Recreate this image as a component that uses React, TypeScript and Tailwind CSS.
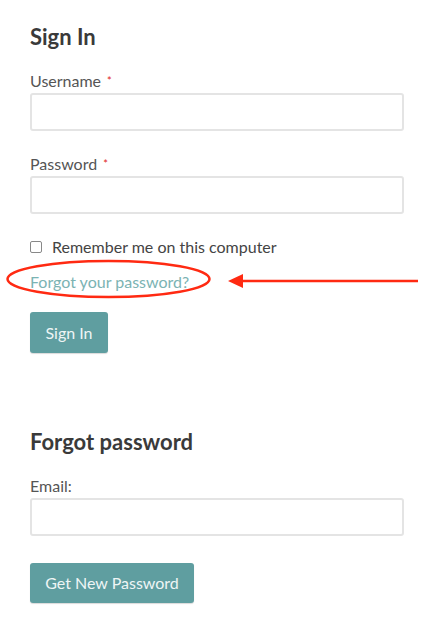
import { useState } from "react";

function Label({ text, required }: { text: string; required?: boolean }) {
  return (
    <label className="block text-[16px] leading-[19px] text-[#555]">
      {text}
      {required && <span className="ml-[6px] text-[11px] align-top text-[#e0231b]">*</span>}
    </label>
  );
}

function TextInput({ type = "text" }: { type?: string }) {
  return (
    <input
      type={type}
      className="mt-[3px] block h-[38px] w-[374px] rounded-[3px] border-2 border-[#e4e4e4] bg-white px-2 text-[15px] outline-none"
    />
  );
}

export default function App() {
  const [remember, setRemember] = useState(false);

  return (
    <div className="relative min-h-screen bg-white font-['Lato','Noto_Sans',sans-serif] text-[#333]">
      <div className="px-[30px] pt-[24px]">
        <h2 className="text-[22px] leading-[26px] font-bold text-[#3a3a3a]">Sign In</h2>

        <div className="mt-[21px]">
          <Label text="Username" required />
          <TextInput />
        </div>

        <div className="mt-[23px]">
          <Label text="Password" required />
          <TextInput type="password" />
        </div>

        <label className="mt-[23px] flex items-center gap-[10px] text-[16px] leading-[19px] text-[#444]">
          <input
            type="checkbox"
            checked={remember}
            onChange={() => setRemember(!remember)}
            className="h-[12px] w-[12px] appearance-none rounded-[2px] border border-[#888] bg-white"
          />
          Remember me on this computer
        </label>

        <a href="#" className="mt-[16px] block text-[16px] leading-[19px] text-[#7bb3b3]">
          Forgot your password?
        </a>

        <button
          type="button"
          className="mt-[21px] block h-[41px] w-[78px] rounded-[3px] bg-[#5f9ea0] text-[16px] text-[#eef5f5] shadow-[0_1px_1px_rgba(0,0,0,0.15)]"
        >
          Sign In
        </button>

        <h2 className="mt-[76px] text-[22px] leading-[26px] font-bold text-[#3a3a3a]">Forgot password</h2>

        <div className="mt-[21px]">
          <Label text="Email:" />
          <TextInput type="email" />
        </div>

        <button
          type="button"
          className="mt-[27px] block h-[40px] w-[164px] rounded-[3px] bg-[#5f9ea0] text-[16px] text-[#eef5f5] shadow-[0_1px_1px_rgba(0,0,0,0.15)]"
        >
          Get New Password
        </button>
      </div>

      {/* annotation overlay */}
      <svg className="pointer-events-none absolute left-0 top-0" width="447" height="633" viewBox="0 0 447 633">
        <ellipse cx="108.5" cy="279" rx="101" ry="18" fill="none" stroke="#ff2a12" strokeWidth="2.5" />
        <line x1="240" y1="281" x2="418" y2="281" stroke="#ff2a12" strokeWidth="2.5" />
        <polygon points="228,281 243,274 243,288" fill="#ff2a12" />
      </svg>
    </div>
  );
}
